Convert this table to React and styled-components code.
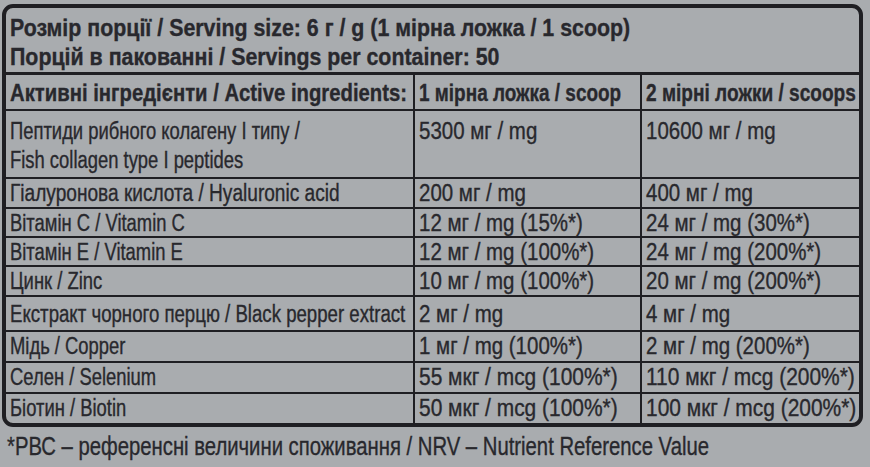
import React from "react";
import styled, { createGlobalStyle } from "styled-components";

// Liberation Sans squeezed horizontally stands in for the condensed face
// of the label (no narrow family is installed).

const GlobalStyle = createGlobalStyle`
  html, body {
    margin: 0;
    padding: 0;
    overflow: hidden;
    background: #a9acaf;
  }
  body {
    font-family: "Liberation Sans", Arial, sans-serif;
    color: #28282d;
  }
`;

const rows = [
  {
    name: ["Пептиди рибного колагену I типу /", "Fish collagen type I peptides"],
    one: "5300 мг / mg",
    two: "10600 мг / mg",
    h: 68,
    pad: 6,
  },
  {
    name: ["Гіалуронова кислота / Hyaluronic acid"],
    one: "200 мг / mg",
    two: "400 мг / mg",
    h: 30,
    sx: 0.83,
  },
  { name: ["Вітамін C / Vitamin C"], one: "12 мг / mg (15%*)", two: "24 мг / mg (30%*)", h: 29 },
  { name: ["Вітамін E / Vitamin E"], one: "12 мг / mg (100%*)", two: "24 мг / mg (200%*)", h: 29 },
  { name: ["Цинк / Zinc"], one: "10 мг / mg (100%*)", two: "20 мг / mg (200%*)", h: 30 },
  {
    name: ["Екстракт чорного перцю / Black pepper extract"],
    one: "2 мг / mg",
    two: "4 мг / mg",
    h: 35,
    pad: 3,
    sx: 0.81,
  },
  { name: ["Мідь / Copper"], one: "1 мг / mg (100%*)", two: "2 мг / mg (200%*)", h: 31 },
  {
    name: ["Селен / Selenium"],
    one: "55 мкг / mcg (100%*)",
    two: "110 мкг / mcg (200%*)",
    h: 31,
    vx: 0.91,
  },
  {
    name: ["Біотин / Biotin"],
    one: "50 мкг / mcg (100%*)",
    two: "100 мкг / mcg (200%*)",
    h: 29,
    vx: 0.91,
    last: true,
  },
];

const App = () => {
  return (
    <>
      <GlobalStyle />
      <Page>
        <Frame>
          <Serving>
            <Squeeze $x={0.89}>Розмір порції / Serving size: 6 г / g (1 мірна ложка / 1 scoop)</Squeeze>
            <Squeeze $x={0.89}>Порцій в пакованні / Servings per container: 50</Squeeze>
          </Serving>
          <Table>
            <Head>
              <Squeeze $x={0.845}>Активні інгредієнти / Active ingredients:</Squeeze>
            </Head>
            <Head>
              <Squeeze $x={0.79}>1 мірна ложка / scoop</Squeeze>
            </Head>
            <Head $end>
              <Squeeze $x={0.795}>2 мірні ложки / scoops</Squeeze>
            </Head>
            {rows.map((r) => (
              <React.Fragment key={r.name[0]}>
                <Cell $h={r.h} $pad={r.pad} $last={r.last}>
                  {r.name.map((line) => (
                    <Squeeze key={line} $x={r.sx || 0.8}>{line}</Squeeze>
                  ))}
                </Cell>
                <Cell $h={r.h} $pad={r.pad} $last={r.last}>
                  <Squeeze $x={r.vx || 0.89}>{r.one}</Squeeze>
                </Cell>
                <Cell $h={r.h} $pad={r.pad} $last={r.last} $end>
                  <Squeeze $x={r.vx || 0.89}>{r.two}</Squeeze>
                </Cell>
              </React.Fragment>
            ))}
          </Table>
        </Frame>
        <Note>
          <Squeeze $x={0.78}>*РВС – референсні величини споживання / NRV – Nutrient Reference Value</Squeeze>
        </Note>
      </Page>
    </>
  );
};

export default App;

const Page = styled.div`
  width: 870px;
  height: 467px;
  padding: 4px 0 0 2px;
  box-sizing: border-box;
`;

const Frame = styled.div`
  width: 853px;
  border: 4px solid #1f1f23;
  border-radius: 11px;
  overflow: hidden;
`;

const Squeeze = styled.span`
  display: block;
  width: max-content;
  white-space: nowrap;
  transform: scaleX(${(p) => p.$x});
  transform-origin: 0 50%;
  -webkit-text-stroke: 0.35px currentColor;
`;

const Serving = styled.div`
  height: 67px;
  padding: 5px 4px 0;
  box-sizing: border-box;
  border-bottom: 3px solid #1f1f23;
  font-weight: 700;
  font-size: 24px;
  line-height: 29px;
`;

const Table = styled.div`
  display: grid;
  grid-template-columns: 409px 227px 217px;
`;

const Head = styled.div`
  height: 36px;
  box-sizing: border-box;
  padding: 3px 4px 0;
  border-bottom: 2px solid #1f1f23;
  border-right: ${(p) => (p.$end ? "none" : "2px solid #1f1f23")};
  font-weight: 700;
  font-size: 24px;
  line-height: 30px;
  overflow: hidden;
`;

const Cell = styled.div`
  height: ${(p) => p.$h}px;
  box-sizing: border-box;
  padding: ${(p) => p.$pad || 0}px 4px 0;
  border-bottom: ${(p) => (p.$last ? "none" : "2px solid #1f1f23")};
  border-right: ${(p) => (p.$end ? "none" : "2px solid #1f1f23")};
  font-size: 23px;
  line-height: 29px;
  overflow: hidden;
`;

const Note = styled.div`
  padding: 4px 0 0 5px;
  font-size: 26px;
  line-height: 30px;
`;
